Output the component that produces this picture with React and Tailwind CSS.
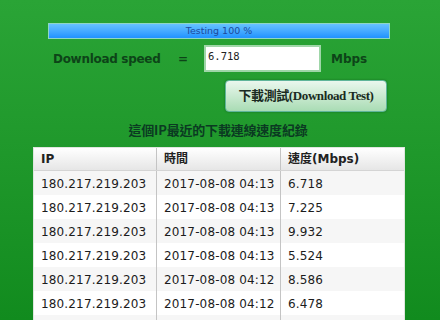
export default function App() {
  const rows = [
    ["180.217.219.203", "2017-08-08 04:13", "6.718"],
    ["180.217.219.203", "2017-08-08 04:13", "7.225"],
    ["180.217.219.203", "2017-08-08 04:13", "9.932"],
    ["180.217.219.203", "2017-08-08 04:13", "5.524"],
    ["180.217.219.203", "2017-08-08 04:12", "8.586"],
    ["180.217.219.203", "2017-08-08 04:12", "6.478"],
    ["", "", ""],
  ];
  const sans = "font-['DejaVu_Sans','Noto_Sans_CJK_TC',sans-serif]";
  return (
    <div className="w-[440px] h-[320px] overflow-hidden bg-gradient-to-b from-[#2aa436] to-[#118b1e] flex flex-col">
      <div className="shrink-0 ml-[48px] mt-[23px] w-[342px] h-[16px] border border-[#8fd6c4] bg-gradient-to-b from-[#66c2ff] to-[#1e92ff] flex items-center justify-center">
        <span className={`${sans} text-[9.5px] leading-none text-[#1d4a9c]`}>Testing 100 %</span>
      </div>
      <div className="shrink-0 flex items-center mt-[6px] h-[27px]">
        <span className={`${sans} ml-[53px] w-[125px] font-bold text-[12px] tracking-[-0.3px] text-[#0d4418]`}>Download speed</span>
        <span className={`${sans} w-[26px] font-bold text-[12px] text-[#0d4418]`}>=</span>
        <div className="w-[117px] h-[27px] bg-white border-2 border-[#9fd6a8] px-[2px] pt-[4px]">
          <span className="font-['DejaVu_Sans_Mono',monospace] text-[10.5px] leading-none text-[#222] block">6.718</span>
        </div>
        <span className={`${sans} ml-[10px] font-bold text-[12px] text-[#0d4418]`}>Mbps</span>
      </div>
      <div className="shrink-0 ml-[225px] mt-[8px] w-[162px] h-[32px] rounded-[4px] border border-[#5fb59a] bg-gradient-to-b from-[#eaf7ee] to-[#a9dcb4] shadow-[0_0_2px_rgba(0,60,20,0.5)] flex items-center justify-center">
        <span className="font-['Liberation_Serif','Noto_Sans_CJK_TC',serif] font-bold text-[13px] tracking-[-0.4px] text-[#1a2a22]">下載測試(Download Test)</span>
      </div>
      <div className="shrink-0 mt-[6px] h-[22px] flex items-center justify-center w-[436px]">
        <span className="font-['Noto_Sans_CJK_TC',sans-serif] font-bold text-[13px] leading-none text-[#0b3a22] tracking-[-0.2px]">這個IP最近的下載連線速度紀錄</span>
      </div>
      <div className="shrink-0 ml-[33px] mt-[7px] w-[372px] border border-[#dfe6df] bg-white">
        <div className="grid grid-cols-[123px_124px_123px] h-[23px] bg-gradient-to-b from-white to-[#e6e6e6] border-b border-[#d4d4d4]">
          {["IP", "時間", "速度(Mbps)"].map((h, i) => (
            <div key={i} className={`${sans} flex items-center pl-[7px] font-bold text-[12px] text-[#222] ${i < 2 ? "border-r border-[#c4c4c4]" : ""}`}>{h}</div>
          ))}
        </div>
        {rows.map((r, ri) => (
          <div key={ri} className={`grid grid-cols-[123px_124px_123px] h-[24px] ${ri % 2 === 0 ? "bg-[#f6f6f6]" : "bg-white"}`}>
            {r.map((c, i) => (
              <div key={i} className={`${sans} flex items-center pl-[7px] pt-[1px] text-[12px] tracking-[0.15px] text-[#1c1c1c] ${i < 2 ? "border-r border-[#c4c4c4]" : ""}`}>{c}</div>
            ))}
          </div>
        ))}
      </div>
    </div>
  );
}
